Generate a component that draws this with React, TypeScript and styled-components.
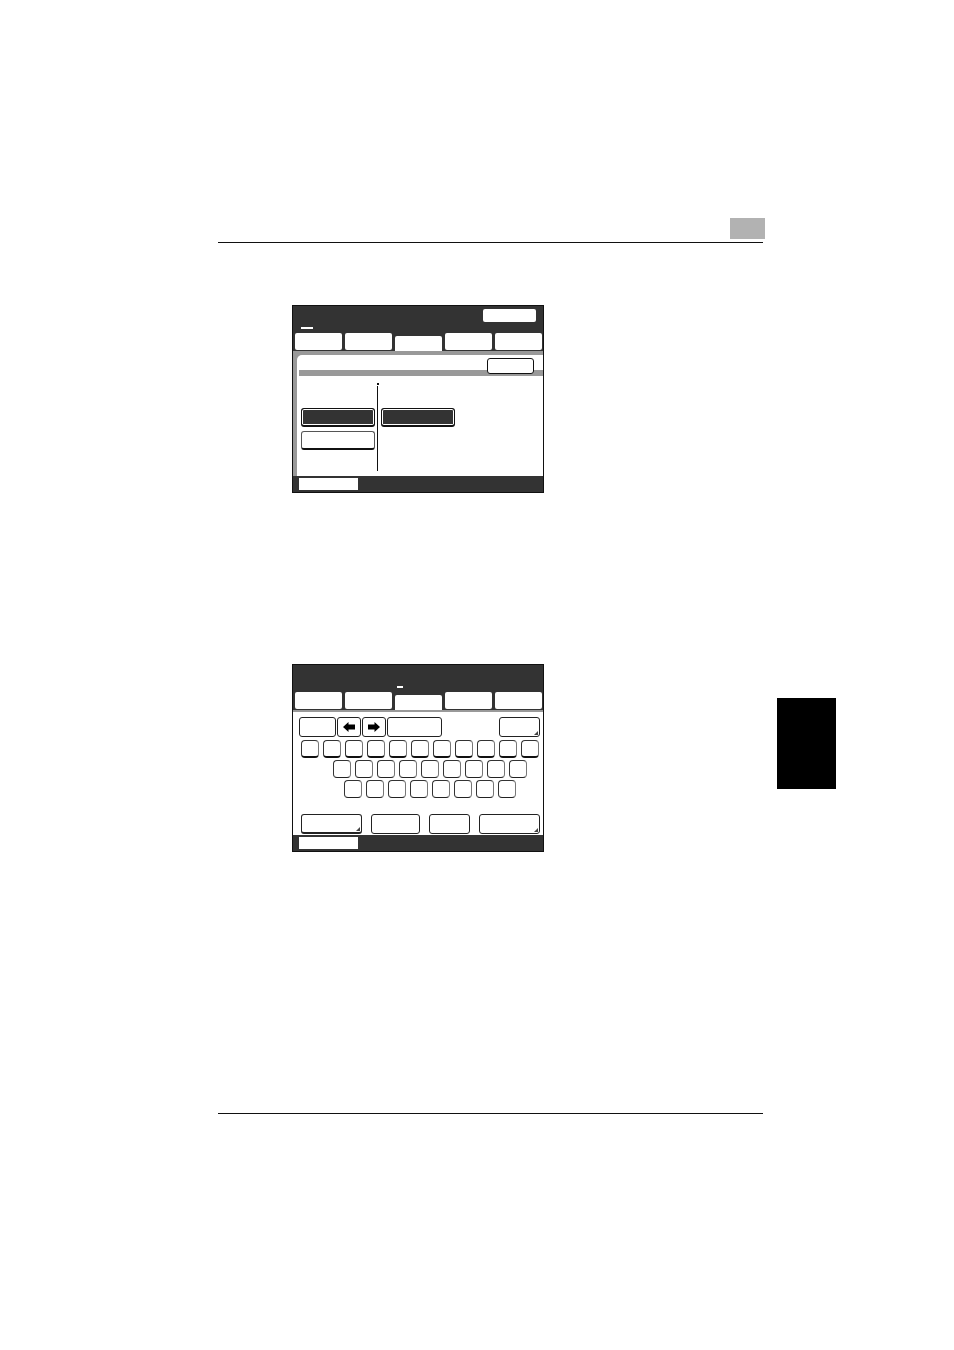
import React from "react";
import styled, { createGlobalStyle } from "styled-components";

const GlobalStyle = createGlobalStyle`
  html, body {
    margin: 0;
    background: #fff;
    font-family: "Liberation Sans", Arial, sans-serif;
  }
  * { box-sizing: border-box; }
`;

const Page = styled.div`
  display: flex;
  align-items: flex-start;
  height: 1350px;
  padding: 218px 0 0 218px;
  background: #fff;
  overflow: hidden;
`;

const Column = styled.div`
  width: 547px;
  flex: none;
  display: flex;
  flex-direction: column;
`;

const ChapterBox = styled.div`
  align-self: flex-end;
  width: 35px;
  height: 21px;
  background: #b2b2b2;
`;

const Rule = styled.div<{ $top: number }>`
  width: 545px;
  height: 1px;
  margin-top: ${(p) => p.$top}px;
  background: #111;
`;

const SideTab = styled.div`
  flex: none;
  width: 59px;
  height: 91px;
  margin: 480px 0 0 12px;
  background: #000;
`;

const Panel = styled.div<{ $top: number }>`
  width: 252px;
  height: 188px;
  margin: ${(p) => p.$top}px 0 0 74px;
  border: 1px solid #111;
  background: #333;
  display: flex;
  flex-direction: column;
`;

const Head = styled.div`
  height: 27px;
  padding: 3px 7px 0 8px;
  display: flex;
  flex-direction: column;
  justify-content: space-between;
`;

const HeadButton = styled.div`
  align-self: flex-end;
  width: 53px;
  height: 13px;
  background: #fff;
  border-radius: 2px;
`;

const Dash = styled.div<{ $left?: number; $width: number }>`
  width: ${(p) => p.$width}px;
  height: 2px;
  margin: 0 0 4px ${(p) => p.$left || 0}px;
  background: #fff;
`;

const Tabs = styled.div`
  height: 18px;
  padding-left: 2px;
  display: flex;
  gap: 3.5px;
  align-items: flex-start;
`;

const Tab = styled.div<{ $active?: boolean }>`
  width: 46.5px;
  height: ${(p) => (p.$active ? 15 : 17)}px;
  margin-top: ${(p) => (p.$active ? 3 : 0)}px;
  background: #fff;
  border-radius: 2px 2px ${(p) => (p.$active ? "0 0" : "2px 2px")};
`;

const GrayBody = styled.div`
  height: 125px;
  padding: 4px 0 0 4px;
  background: #999;
`;

const Inner = styled.div`
  height: 121px;
  background: #fff;
  border-top-left-radius: 5px;
`;

const TitleRow = styled.div`
  height: 21px;
  margin-left: 2px;
  padding: 3px 9px 0 0;
  border-bottom: 6px solid #999;
  display: flex;
  justify-content: flex-end;
`;

const SmallButton = styled.div`
  width: 47px;
  height: 16px;
  background: #fff;
  border: 1px solid #111;
  border-radius: 3px;
`;

const Columns = styled.div`
  display: flex;
  padding: 7px 0 0 4px;
`;

const ButtonStack = styled.div`
  width: 74px;
  padding-top: 25px;
  display: flex;
  flex-direction: column;
  gap: 4px;
`;

const Divider = styled.div`
  width: 2px;
  margin: 0 2px;
  display: flex;
  flex-direction: column;
  align-items: flex-start;
  gap: 1px;
`;

const Dot = styled.div`
  width: 2px;
  height: 2px;
  background: #111;
`;

const Line = styled.div`
  width: 1px;
  height: 85px;
  background: #111;
`;

const ModeButton = styled.div<{ $on?: boolean }>`
  width: 74px;
  height: 19px;
  border: 1px solid ${(p) => (p.$on ? "#111" : "#555")};
  border-bottom: 2px solid #111;
  border-radius: 3px;
  background: ${(p) => (p.$on ? "#333" : "#fff")};
  box-shadow: ${(p) => (p.$on ? "inset 0 0 0 1px #fff" : "none")};
`;

const Footer = styled.div`
  height: 16px;
  padding: 2px 0 0 6px;
  background: #333;
`;

const FooterBlock = styled.div`
  width: 59px;
  height: 12px;
  background: #fff;
`;

const KeyBody = styled.div`
  height: 125px;
  border-top: 2px solid #999;
  background: #fff;
  padding: 5px 3px 0 6px;
  display: flex;
  flex-direction: column;
`;

const KeyToolbar = styled.div`
  display: flex;
  gap: 1px;
  height: 20px;
`;

const KeyButton = styled.div<{ $width: number; $corner?: boolean; $heavy?: boolean }>`
  position: relative;
  flex: none;
  width: ${(p) => p.$width}px;
  height: 20px;
  display: flex;
  align-items: center;
  justify-content: center;
  background: #fff;
  border: 1px solid #222;
  border-bottom-width: ${(p) => (p.$heavy ? 2 : 1)}px;
  border-radius: 3px;

  &::after {
    content: "";
    display: ${(p) => (p.$corner ? "block" : "none")};
    position: absolute;
    right: 1px;
    bottom: 1px;
    border-style: solid;
    border-width: 0 0 4px 4px;
    border-color: transparent transparent #444 transparent;
  }
`;

const PushRight = styled.div`
  flex: 1;
`;

const KeyRow = styled.div<{ $indent: number; $top: number }>`
  display: flex;
  gap: 4px;
  padding-left: ${(p) => p.$indent}px;
  margin-top: ${(p) => p.$top}px;
`;

const Key = styled.div<{ $heavy?: boolean }>`
  flex: none;
  width: 18px;
  height: 18px;
  background: #fff;
  border: 1px solid #333;
  border-right-color: #777;
  border-bottom: ${(p) => (p.$heavy ? "2px solid #111" : "1px solid #222")};
  border-radius: 4px;
`;

const ActionRow = styled.div`
  display: flex;
  gap: 9px;
  margin-top: 16px;
  padding-left: 2px;
`;

const Arrow = ({ flip }: { flip?: boolean }) => (
  <svg width="12" height="10" viewBox="0 0 12 10" style={flip ? { transform: "scaleX(-1)" } : undefined}>
    <path d="M0 2.5 H6.5 V0 L12 5 L6.5 10 V7.5 H0 Z" fill="#000" />
  </svg>
);

const keyRows = [
  { count: 11, indent: 2, top: 3, heavy: true },
  { count: 9, indent: 34, top: 2, heavy: false },
  { count: 8, indent: 45, top: 2, heavy: false },
];

function App() {
  return (
    <Page>
      <GlobalStyle />
      <Column>
        <ChapterBox />
        <Rule $top={3} />

        <Panel $top={62}>
          <Head>
            <HeadButton />
            <Dash $width={12} />
          </Head>
          <Tabs>
            <Tab />
            <Tab />
            <Tab $active />
            <Tab />
            <Tab />
          </Tabs>
          <GrayBody>
            <Inner>
              <TitleRow>
                <SmallButton />
              </TitleRow>
              <Columns>
                <ButtonStack>
                  <ModeButton $on />
                  <ModeButton />
                </ButtonStack>
                <Divider>
                  <Dot />
                  <Line />
                </Divider>
                <ButtonStack>
                  <ModeButton $on />
                </ButtonStack>
              </Columns>
            </Inner>
          </GrayBody>
          <Footer>
            <FooterBlock />
          </Footer>
        </Panel>

        <Panel $top={171}>
          <Head>
            <PushRight />
            <Dash $left={96} $width={6} />
          </Head>
          <Tabs>
            <Tab />
            <Tab />
            <Tab $active />
            <Tab />
            <Tab />
          </Tabs>
          <KeyBody>
            <KeyToolbar>
              <KeyButton $width={37} />
              <KeyButton $width={24}>
                <Arrow flip />
              </KeyButton>
              <KeyButton $width={24}>
                <Arrow />
              </KeyButton>
              <KeyButton $width={55} />
              <PushRight />
              <KeyButton $width={41} $corner />
            </KeyToolbar>
            {keyRows.map((row) => (
              <KeyRow key={row.indent} $indent={row.indent} $top={row.top}>
                {Array.from({ length: row.count }).map((_, i) => (
                  <Key key={i} $heavy={row.heavy} />
                ))}
              </KeyRow>
            ))}
            <ActionRow>
              <KeyButton $width={61} $corner $heavy />
              <KeyButton $width={49} />
              <KeyButton $width={41} />
              <KeyButton $width={61} $corner />
            </ActionRow>
          </KeyBody>
          <Footer>
            <FooterBlock />
          </Footer>
        </Panel>

        <Rule $top={261} />
      </Column>
      <SideTab />
    </Page>
  );
}

export default App;
